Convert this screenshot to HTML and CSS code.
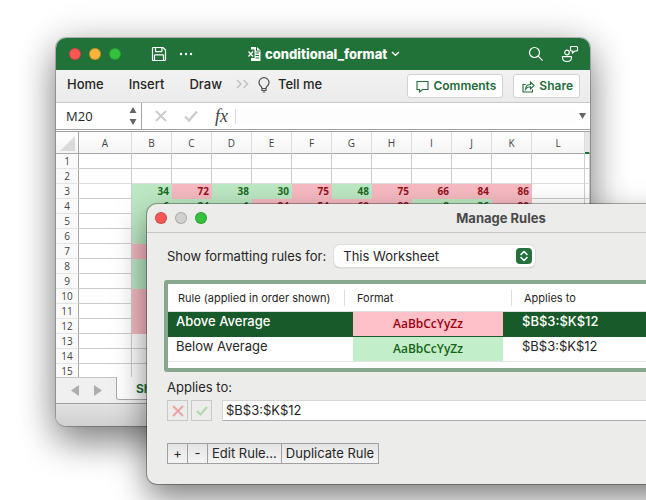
FILE: index.html
```html
<!DOCTYPE html>
<html lang="en">
<head>
<meta charset="utf-8">
<title>conditional_format</title>
<link rel="stylesheet" href="styles.css">
</head>
<body>
<main class="desktop">
  <section class="workbook" aria-label="Workbook">
    <header class="titlebar">
      <span class="lights"><i class="light close"></i><i class="light minimize"></i><i class="light expand"></i></span>
      <button class="icon-btn save" aria-label="Save"><svg width="16" height="16" viewBox="0 0 16 16" fill="none" stroke="currentColor" stroke-width="1.2"><path d="M1.5 2.5q0-1 1-1h9.5l2.5 2.5v9.5q0 1-1 1h-11q-1 0-1-1zM4.500 1.500v3.500q0 .7.700.7h5q.7 0 .7-.7v-3.500M3.500 14.500v-5q0-.7.700-.7h7.600q.7 0 .7.700v5"/></svg></button>
      <button class="icon-btn" aria-label="More"><svg width="14" height="4" viewBox="0 0 14 4" fill="currentColor"><circle cx="2" cy="2" r="1.200"/><circle cx="7" cy="2" r="1.200"/><circle cx="12" cy="2" r="1.200"/></svg></button>
      <h1 class="doc-title">
        <svg width="14" height="14" viewBox="0 0 14 14"><path d="M4 0h6l3.500 3.500V14H4z" fill="#fff"/><path d="M9.500 0v4h4" fill="none" stroke="#217239"/><path d="M8.500 6h3.500M8.500 8.500h3.500M8.500 11h3.500" stroke="#217239" stroke-width="1"/><path d="M0 2.500h7.500v8.500H0z" fill="#217239"/><path d="M1.500 4.500l4.500 5M6 4.500l-4.500 5" stroke="#fff" stroke-width="1.200"/></svg>
        conditional_format
        <svg class="chev" width="9" height="6" viewBox="0 0 9 6" fill="none" stroke="currentColor" stroke-width="1.500"><path d="M1 1l3.500 3.200L8 1"/></svg>
      </h1>
      <button class="icon-btn search" aria-label="Search"><svg width="16" height="16" viewBox="0 0 16 16" fill="none" stroke="currentColor" stroke-width="1.200"><circle cx="6.500" cy="6.500" r="5"/><path d="M10.200 10.200l4.500 4.500"/></svg></button>
      <button class="icon-btn" aria-label="Presence"><svg width="18" height="18" viewBox="0 0 18 18" fill="none" stroke="currentColor" stroke-width="1.200"><circle cx="6" cy="7.500" r="2.300"/><path d="M1.500 11.700h9q.5 4.800-4.500 4.800t-4.500-4.800zM10.500 1.500h5q1 0 1 1v2.500q0 1-1 1h-1.700l-2.300 2v-2h-1q-1 0-1-1v-2.500q0-1 1-1z"/></svg></button>
    </header>

    <nav class="ribbon">
      <a href="#">Home</a><a href="#">Insert</a><a href="#">Draw</a>
      <svg class="more-tabs" width="13" height="10" viewBox="0 0 13 10" fill="none" stroke="#c2c2c2" stroke-width="1.500"><path d="M1 1l4 4-4 4M7.500 1l4 4-4 4"/></svg>
      <svg class="bulb" width="12" height="16" viewBox="0 0 12 16" fill="none" stroke="#4d4d4d" stroke-width="1.200"><path d="M4 11.500Q3.800 9.800 2.200 8.500 1 7.200 1 5.500a5 4.800 0 0 1 10 0q0 1.700-1.200 3Q8.200 9.800 8 11.500zM4 11.500v2h4v-2M4.800 15h2.400"/></svg>
      <a href="#" class="tell">Tell me</a>
      <span class="ribbon-actions">
        <button class="action"><svg width="13" height="13" viewBox="0 0 13 13" fill="none" stroke="currentColor" stroke-width="1.100"><path d="M1 1.500h11v8H6.500L3.500 12V9.500H1z"/></svg>Comments</button>
        <button class="action"><svg width="13" height="13" viewBox="0 0 13 13" fill="none" stroke="currentColor" stroke-width="1.100"><path d="M3.500 4.500H1v7.500h9.500V9.500M3.500 9.200Q4 4.500 8.500 4.500V2L12 5.500 8.500 9V6.700Q5.500 6.500 3.500 9.200z"/></svg>Share</button>
      </span>
    </nav>

    <div class="formula-bar">
      <input class="name-box" aria-label="Name box" value="M20">
      <svg class="stepper" width="8" height="18" viewBox="0 0 8 18" fill="#666"><path d="M4 0l3.500 6h-7zM4 18l3.500-6h-7z"/></svg>
      <span class="fx-tools">
        <svg width="12" height="12" viewBox="0 0 12 12" fill="none" stroke="#cbcbcb" stroke-width="2"><path d="M1 1l10 10M11 1L1 11"/></svg>
        <svg width="14" height="12" viewBox="0 0 14 12" fill="none" stroke="#cbcbcb" stroke-width="2.400"><path d="M1 6.500l4 4L13 1.500"/></svg>
        <em class="fx">fx</em>
      </span>
      <input class="formula" aria-label="Formula">
      <svg class="expand-arrow" width="7" height="6" viewBox="0 0 7 6" fill="#666"><path d="M0 0h7L3.500 6z"/></svg>
    </div>

    <div class="sheet">
      <table class="grid">
        <colgroup><col class="c-num"><col class="c-wide"><col span="10" class="c-cell"><col class="c-wide"><col></colgroup>
        <thead><tr><th class="corner"><svg width="15" height="15" viewBox="0 0 15 15"><path d="M15 0v15H0z" fill="#dadada"/></svg></th><th>A</th><th>B</th><th>C</th><th>D</th><th>E</th><th>F</th><th>G</th><th>H</th><th>I</th><th>J</th><th>K</th><th>L</th><th class="active"></th></tr></thead>
        <tbody>
          <tr><th>1</th><td></td><td></td><td></td><td></td><td></td><td></td><td></td><td></td><td></td><td></td><td></td><td></td><td></td></tr>
          <tr class="before"><th>2</th><td></td><td></td><td></td><td></td><td></td><td></td><td></td><td></td><td></td><td></td><td></td><td></td><td></td></tr>
          <tr><th>3</th><td></td><td class="lo">34</td><td class="hi">72</td><td class="lo">38</td><td class="lo">30</td><td class="hi">75</td><td class="lo">48</td><td class="hi">75</td><td class="hi">66</td><td class="hi">84</td><td class="hi">86</td><td></td><td></td></tr>
          <tr><th>4</th><td></td><td class="lo">6</td><td class="lo">24</td><td class="lo">1</td><td class="hi">84</td><td class="hi">54</td><td class="hi">60</td><td class="hi">88</td><td class="lo">8</td><td class="lo">36</td><td class="hi">80</td><td></td><td></td></tr>
          <tr><th>5</th><td></td><td class="lo"></td><td colspan="11"></td></tr>
          <tr><th>6</th><td></td><td class="lo"></td><td colspan="11"></td></tr>
          <tr><th>7</th><td></td><td class="hi"></td><td colspan="11"></td></tr>
          <tr><th>8</th><td></td><td class="lo"></td><td colspan="11"></td></tr>
          <tr><th>9</th><td></td><td class="lo"></td><td colspan="11"></td></tr>
          <tr><th>10</th><td></td><td class="hi"></td><td colspan="11"></td></tr>
          <tr><th>11</th><td></td><td class="hi"></td><td colspan="11"></td></tr>
          <tr><th>12</th><td></td><td class="hi"></td><td colspan="11"></td></tr>
          <tr><th>13</th><td></td><td></td><td colspan="11"></td></tr>
          <tr><th>14</th><td></td><td></td><td colspan="11"></td></tr>
          <tr><th>15</th><td></td><td></td><td colspan="11"></td></tr>
        </tbody>
      </table>
    </div>

    <div class="tabs">
      <span class="tab-nav"><svg width="8" height="11" viewBox="0 0 8 11" fill="#adadad"><path d="M8 0v11L0 5.500z"/></svg><svg width="8" height="11" viewBox="0 0 8 11" fill="#adadad"><path d="M0 0v11l8-5.500z"/></svg></span>
      <button class="tab">Sheet1</button>
    </div>
    <footer class="status"></footer>
  </section>

  <section class="dialog" role="dialog" aria-labelledby="dlg-title">
    <header class="dialog-bar">
      <span class="lights"><i class="light close"></i><i class="light off"></i><i class="light expand"></i></span>
      <h2 id="dlg-title">Manage Rules</h2>
    </header>
    <div class="dialog-body">
      <div class="scope">
        <label for="scope">Show formatting rules for:</label>
        <span class="select-wrap">
          <select id="scope"><option>This Worksheet</option></select>
          <svg width="16" height="16" viewBox="0 0 16 16"><rect width="16" height="16" rx="4" fill="#23713c"/><path d="M5 6.500L8 3.500l3 3M5 9.500l3 3 3-3" fill="none" stroke="#fff" stroke-width="1.500" stroke-linecap="round" stroke-linejoin="round"/></svg>
        </span>
      </div>
      <div class="rules-frame">
        <table class="rules">
          <colgroup><col class="r-name"><col class="r-format"><col></colgroup>
          <thead><tr><th><span>Rule (applied in order shown)</span></th><th><span>Format</span></th><th><span>Applies to</span></th></tr></thead>
          <tbody>
            <tr class="selected"><td>Above Average</td><td class="sample hi">AaBbCcYyZz</td><td class="range">$B$3:$K$12</td></tr>
            <tr><td>Below Average</td><td class="sample lo">AaBbCcYyZz</td><td class="range">$B$3:$K$12</td></tr>
          </tbody>
        </table>
      </div>
      <label class="applies-label" for="applies">Applies to:</label>
      <div class="applies">
        <button class="square" aria-label="Cancel"><svg width="12" height="12" viewBox="0 0 12 12" fill="none" stroke="#eaa3a5" stroke-width="2"><path d="M1 1l10 10M11 1L1 11"/></svg></button>
        <button class="square" aria-label="Accept"><svg width="12" height="10" viewBox="0 0 12 10" fill="none" stroke="#b0d9aa" stroke-width="2"><path d="M1 5l3.500 3.500L11 1"/></svg></button>
        <input id="applies" value="$B$3:$K$12">
      </div>
      <div class="rule-buttons"><button class="small">+</button><button class="small">-</button><button class="edit">Edit Rule...</button><button class="duplicate">Duplicate Rule</button></div>
    </div>
  </section>
</main>
</body>
</html>
```
FILE: styles.css
```css
* { box-sizing: border-box; }
body { margin: 0; background: #fff; font-family: Inter, "Liberation Sans", sans-serif; color: #262626; }
button, input, select { font: inherit; color: inherit; margin: 0; padding: 0; }
svg { display: block; flex: none; }
h1, h2 { margin: 0; }
a { color: inherit; text-decoration: none; }

.desktop { position: relative; min-height: 100vh; padding: 38px 56px 0; overflow: hidden; }

/* Workbook window */
.workbook {
  border-radius: 10px;
  overflow: hidden;
  background: #fff;
  box-shadow: 0 0 0 1px rgba(0, 0, 0, .22), 0 0 40px rgba(0, 0, 0, .14), 0 16px 36px rgba(0, 0, 0, .45);
}
.lights { display: flex; gap: 8px; }
.light { width: 12px; height: 12px; border-radius: 50%; border: 1px solid rgba(0, 0, 0, .18); }
.close { background: #fc5753; }
.minimize { background: #fdb43a; }
.expand { background: #35c13c; }
.off { background: #d0d0ce; }

.titlebar { display: flex; align-items: center; height: 32px; padding: 0 11px 0 13px; background: #217239; color: #fff; }
.icon-btn { display: flex; border: 0; background: none; }
.save { margin: 0 12px 0 30px; }
.doc-title { display: flex; align-items: center; gap: 4px; margin-left: 54px; font-size: 13px; line-height: 16px; font-weight: 800; }
.search { margin: 0 17px 0 auto; }

.ribbon {
  display: flex; align-items: center; height: 33px; padding: 0 10px 0 11px;
  background: linear-gradient(#f2f2f2, #ebebeb); border-bottom: 1px solid #c8c8c8;
  font-size: 13px; font-weight: 500; line-height: 16px;
}
.ribbon a { margin-right: 25px; margin-bottom: 4px; }
.ribbon .more-tabs { margin: 0 9px 4px -11px; }
.bulb { margin: 0 8px 3px 0; }
.ribbon .tell { margin-right: 0; }
.ribbon-actions { display: flex; gap: 10px; margin-left: auto; }
.action {
  display: flex; align-items: center; gap: 4px; height: 24px; padding: 0 6px 0 8px;
  border: 1px solid #d2d2d2; border-radius: 3px; background: #fff;
  color: #1f6b3a; font-size: 12px; font-weight: 600;
}

.formula-bar { display: flex; align-items: center; height: 29px; padding-right: 4px; border-bottom: 3px double #a0a0a0; }
.name-box { width: 73px; height: 25px; padding-left: 10px; border: 0; background: none; font: 13px/16px "Open Sans", sans-serif; }
.stepper { margin-right: 4px; }
.fx-tools { display: flex; align-items: center; gap: 17px; height: 26px; padding-left: 13px; border-left: 1px solid #a6a6a6; }
.fx { font: italic 18px/20px "Liberation Serif", serif; color: #444; }
.formula { flex: 1; min-width: 0; height: 15px; margin-left: 7px; border: 0; border-left: 1px solid #ddd; background: #fdfdfd; }

.sheet { height: 245px; overflow: hidden; }
.grid { width: 100%; table-layout: fixed; border-collapse: separate; border-spacing: 0; font: 10px/14px "Open Sans", sans-serif; }
.c-num { width: 23px; }
.c-wide { width: 53px; }
.c-cell { width: 40px; }
.grid th, .grid td { height: 15px; padding: 0; border: 0 solid #ccc; border-width: 0 1px 1px 0; font-weight: 700; }
.grid th { font-weight: 400; color: #444; }
.grid tbody th { background: #fafafa; border-color: #e4e4e4; border-right-color: #a8a8a8; }
.grid thead th { height: 22px; background: linear-gradient(#fff, #f4f4f4); border-color: #ddd; border-bottom-color: #a8a8a8; }
.grid thead .corner { border-right-color: #a8a8a8; padding: 2px 3px 0 4px; }
.grid thead .active { border-bottom: 2px solid #217239; background: #e6e6e6; }
.grid td { text-align: right; padding-right: 2px; overflow: hidden; }
.grid .before td { border-bottom-color: #ddd; }
.grid td.lo { background: #bde8c4; border-color: #bde8c4; color: #176b1a; }
.grid td.hi { background: #f7bac2; border-color: #f7bac2; color: #96101a; }

.tabs { display: flex; height: 27px; background: #f0f0f0; border-bottom: 1px solid #a0a0a0; }
.tab-nav { display: flex; align-items: center; gap: 15px; width: 60px; padding-left: 15px; border-top: 1px solid #c4c4c4; }
.tab { height: 23px; padding: 0 19px; border: 1px solid #a8a8a8; border-top: 0; border-radius: 0 0 3px 3px; background: #fff; color: #217239; font-size: 12px; font-weight: 700; }
.status { height: 22px; background: linear-gradient(#e2e2e2, #d0d0d0); }

/* Rules dialog, running past the right edge */
.dialog {
  position: absolute; left: 147px; right: -209px; top: 204px;
  border-radius: 10px; overflow: hidden; background: #ececea;
  box-shadow: 0 0 0 1px rgba(0, 0, 0, .3), 0 14px 32px rgba(0, 0, 0, .5);
}
.dialog-bar { display: grid; grid-template-columns: 1fr auto 1fr; align-items: center; height: 29px; padding: 0 8px; border-bottom: 1px solid #c6c6c6; }
.dialog-bar h2 { font-size: 13px; line-height: 16px; font-weight: 700; color: #4a4a4a; }
.dialog-body { padding: 12px 20px 20px; font-size: 13px; line-height: 16px; }
.scope { display: flex; align-items: center; gap: 8px; margin-bottom: 13px; }
.select-wrap { display: grid; align-items: center; width: 201px; height: 22px; }
.select-wrap > * { grid-area: 1 / 1; }
.select-wrap svg { justify-self: end; margin-right: 3px; pointer-events: none; }
.scope select { appearance: none; width: 100%; height: 22px; padding-left: 9px; border: 0; border-radius: 6px; background: #fff; box-shadow: 0 0 0 1px #ddd, 0 1px 1px #888; }

.rules-frame { margin: 0 -3px 7px; height: 92px; border: 4px solid #86a68d; border-radius: 3px; background: #fff; }
.rules { width: 100%; table-layout: fixed; border-collapse: separate; border-spacing: 0; }
.r-name { width: 185px; }
.r-format { width: 150px; }
.rules th { height: 28px; padding: 0; border-bottom: 1px solid #e0e0e0; text-align: left; font-size: 11px; font-weight: 400; }
.rules th span { display: block; padding-left: 10px; }
.rules th + th span { margin-left: -9px; padding-left: 12px; border-left: 1px solid #ddd; }
.rules th:last-child span { margin-left: 8px; }
.rules td { height: 25px; padding: 0 8px 7px; border-bottom: 1px solid #e4e4e4; }
.rules .range { padding-left: 19px; }
.rules .selected td { background: #195a2a; color: #fff; border-color: #195a2a; font-weight: 500; }
.rules .sample, .rules .selected .sample { padding: 0; text-align: center; font: 600 12px/16px "Open Sans", sans-serif; }
.rules .selected .sample { background: #fec0c9; color: #9c0010; }
.rules .sample.lo { background: #c2eec9; color: #156315; }

.applies-label { display: block; height: 21px; }
.applies { display: flex; margin-bottom: 22px; }
.square { display: grid; place-items: center; width: 21px; height: 21px; margin-right: 3px; border: 1px solid #c8c8c6; background: #ececea; }
.applies input { flex: 1; min-width: 0; height: 21px; margin-left: 7px; padding: 0 0 1px 3px; border: 1px solid #d6d6d6; border-bottom-color: #adadad; background: #fff; }
.rule-buttons { display: flex; }
.rule-buttons button { height: 21px; padding-bottom: 1px; margin-right: -1px; border: 1px solid #a0a0a0; background: linear-gradient(#e4e4e4, #f4f4f4); white-space: nowrap; }
.rule-buttons .small { width: 21px; }
.rule-buttons .edit, .rule-buttons .duplicate { padding: 0 4px 1px; }
```
